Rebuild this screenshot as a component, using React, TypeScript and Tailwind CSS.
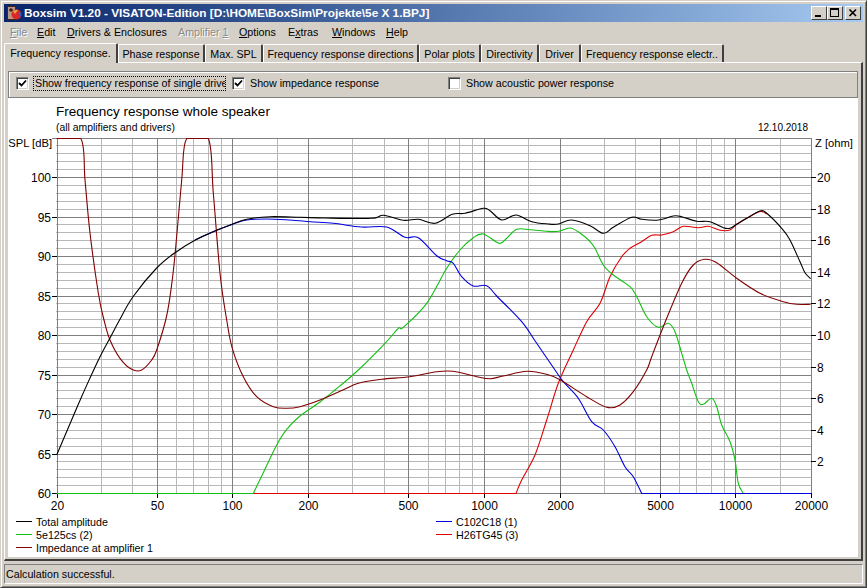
import { useId } from "react"

const ui = "font-['Liberation_Sans',sans-serif] text-[10.7px] leading-[14px] text-black"

// chart scale, page pixels
const xOf = (hz: number) => Math.round(56.5 + (Math.log10(hz / 20) * 754.5) / 3) + 0.5
const yOf = (db: number) => Math.round(493 - (db - 60) * 7.9) + 0.5
const yOhm = (z: number) => Math.round(493 - z * 15.8) + 0.5

const minorHz = [30, 40, 60, 70, 80, 90, 150, 300, 400, 600, 700, 800, 900, 1500, 3000, 4000, 6000, 7000, 8000, 9000, 15000]
const majorHz = [20, 50, 100, 200, 500, 1000, 2000, 5000, 10000, 20000]
const dbAll = Array.from({ length: 46 }, (_, i) => 60 + i)

type Pt = [number, number]

const total: Pt[] = [
  [56.7, 455], [78, 405], [90, 378], [100, 356.7], [110, 338], [119, 321], [133, 296.7], [156.7, 268], [175, 252.7], [196.7, 239.3], [215, 231], [232, 224.3],
  [246.7, 219.3], [270, 216.7], [300, 217.3], [325, 218], [371.7, 218.3], [383.3, 215.3], [403.3, 220.3], [418.3, 219.3],
  [435, 223.3], [452.3, 214.3], [465, 213.3], [483.3, 208.3], [490, 210.7], [501.7, 220], [516, 215], [531.7, 221.7],
  [548.3, 224], [558.3, 224], [571.7, 220], [590, 225.7], [603.3, 233.3], [613.3, 227.3], [631.7, 217.3], [641.7, 219.3],
  [658.3, 220], [673.3, 216], [681.7, 216.7], [696.7, 221.3], [710, 221.7], [723.3, 227.7], [730, 228.3], [736.7, 224.3],
  [746.7, 218.3], [760, 211], [766.7, 213.3], [781.7, 228.3], [790, 240], [800, 261.7], [805, 272.7], [810.7, 278.7],
]

const c102: Pt[] = [
  [195, 240], [215, 231], [232, 224.5], [246.7, 220], [266.7, 219], [290, 220], [310, 221.7], [333.3, 223.3], [361.7, 227],
  [386.7, 227], [405, 237.3], [418.3, 237.7], [436.7, 255.7], [446.7, 260.7], [453.3, 263.3], [461.7, 276.7], [473.3, 286],
  [486.7, 285.7], [496.7, 296], [521.7, 321.7], [536.7, 343.3], [555, 370], [563.3, 381.7], [578.3, 398.3], [591.7, 421.7],
  [603.3, 430], [615, 446.7], [625, 466.7], [633.3, 476.7], [641.7, 493.5], [811, 493.5],
]

const e125: Pt[] = [
  [56.5, 493.5], [253.3, 493.5], [263, 473.3], [276.7, 445], [286.7, 429.3], [300, 416], [320, 402], [335, 390], [358.3, 370],
  [385, 343.3], [398.3, 328.3], [403.3, 327.3], [426.7, 303.3], [446.7, 268.3], [460, 250], [473.3, 237.7], [483.3, 234],
  [499.3, 243.3], [506.7, 238.3], [516.7, 229.3], [530, 229.7], [546.7, 231.3], [558.3, 231.3], [570, 228], [580, 233],
  [590, 241.5], [595, 248.3], [603.3, 265], [613.3, 275], [630, 286.7], [636.7, 296.7], [646.7, 316.7], [658.3, 327.3],
  [668.3, 323.3], [675, 331.7], [681.7, 353.3], [686.7, 370], [691.7, 383.3], [698.3, 401.7], [703.3, 404.3], [711.7, 398.3],
  [716.7, 406.7], [721.7, 425], [730, 441.7], [735, 460], [738.3, 483.3], [743.3, 493.5], [811, 493.5],
]

const h26: Pt[] = [
  [253, 493.5], [516, 493.5], [521.7, 480], [535, 455], [546.7, 420], [558.3, 383.3], [573.3, 350], [586.7, 321.7], [600, 303.3],
  [610, 276.7], [621.7, 256.7], [630, 248.3], [641.7, 241.7], [651.7, 235.3], [661.7, 235], [673.3, 231.7], [683.3, 226.3],
  [698.3, 227.7], [708.3, 226.3], [720, 230.3], [730, 230], [736.7, 224.3], [746.7, 218.3], [760, 211.5], [766.7, 214],
]

const impedance: Pt[] = [
  [56.5, 138.5], [80.7, 138.5], [85, 180], [90, 233], [98.3, 293], [104, 320], [110, 340], [120, 358.3], [131.7, 369.3],
  [141.7, 370], [151.7, 360], [156.7, 350], [165.7, 320], [170, 296.7], [175, 255], [181.7, 180], [186.7, 138.5], [208.3, 138.5],
  [213.3, 193], [220, 273.3], [226.7, 320], [232.3, 348.3], [243.3, 376.7], [256.7, 396.7], [273.3, 406.7], [286.7, 408.3],
  [300, 406.7], [320, 400], [343, 390], [358.3, 383.3], [381.7, 379.3], [410, 376.7], [436.7, 371.7], [453.3, 371.3],
  [476.7, 376.7], [490, 378.7], [503.3, 376], [526.7, 371.3], [546.7, 374.3], [560, 379.8], [586.7, 396.7], [606.7, 407.3],
  [620, 405], [633.3, 391.7], [646.7, 370], [651.7, 356.7], [666.7, 318.3], [681.7, 283.3], [693.3, 265], [705, 259.3],
  [716.7, 262.7], [736.7, 278.3], [760, 293.3], [783.3, 301.7], [796.7, 304.3], [810.7, 304.3],
]

const clampY = (y: number) => Math.min(493.5, Math.max(138.5, y))

// catmull-rom through the read-off points, long flat runs stay straight
function toPath(pts: Pt[]) {
  let d = `M${pts[0][0]} ${pts[0][1]}`
  for (let i = 0; i < pts.length - 1; i++) {
    const p1 = pts[i]
    const p2 = pts[i + 1]
    let p0 = pts[Math.max(i - 1, 0)]
    let p3 = pts[Math.min(i + 2, pts.length - 1)]
    if (p2[0] - p1[0] > 60) {
      d += ` L${p2[0]} ${p2[1]}`
      continue
    }
    if (p1[0] - p0[0] > 60) p0 = p1
    if (p3[0] - p2[0] > 60) p3 = p2
    const c1x = p1[0] + (p2[0] - p0[0]) / 6
    const c1y = clampY(p1[1] + (p2[1] - p0[1]) / 6)
    const c2x = p2[0] - (p3[0] - p1[0]) / 6
    const c2y = clampY(p2[1] - (p3[1] - p1[1]) / 6)
    d += ` C${c1x.toFixed(1)} ${c1y.toFixed(1)} ${c2x.toFixed(1)} ${c2y.toFixed(1)} ${p2[0]} ${p2[1]}`
  }
  return d
}

function Curve({ pts, color }: { pts: Pt[]; color: string }) {
  return <path d={toPath(pts)} fill="none" stroke={color} strokeWidth={1.1} />
}

function Chart() {
  const clip = useId()
  return (
    <svg width={850} height={377} viewBox="8 135 850 377" className="block shrink-0">
      <defs>
        <clipPath id={clip}><rect x={56} y={138} width={756} height={357} /></clipPath>
      </defs>
      {dbAll.filter(d => d % 5 !== 0).map(d => (
        <line key={d} x1={56} x2={811} y1={yOf(d)} y2={yOf(d)} stroke="#b8b8b8" />
      ))}
      {minorHz.map(f => <line key={f} x1={xOf(f)} x2={xOf(f)} y1={138} y2={494} stroke="#b8b8b8" />)}
      {dbAll.filter(d => d % 5 === 0).map(d => (
        <line key={d} x1={52} x2={811} y1={yOf(d)} y2={yOf(d)} stroke="#808080" />
      ))}
      {majorHz.map(f => <line key={f} x1={xOf(f)} x2={xOf(f)} y1={138} y2={498} stroke="#808080" />)}
      {[60, 65, 70, 75, 80, 85, 90, 95, 100].map(d => (
        <g key={d}>
          <line x1={52} x2={57} y1={yOf(d)} y2={yOf(d)} stroke="#000" />
          <text x={51} y={yOf(d) + 4.5} textAnchor="end" fontSize={12} fill="#000">{d}</text>
        </g>
      ))}
      {[2, 4, 6, 8, 10, 12, 14, 16, 18, 20].map(z => (
        <g key={z}>
          <line x1={811} x2={816} y1={yOhm(z)} y2={yOhm(z)} stroke="#000" />
          <text x={817} y={yOhm(z) + 4.5} fontSize={12} fill="#000">{z}</text>
        </g>
      ))}
      {majorHz.map(f => (
        <g key={f}>
          <line x1={xOf(f)} x2={xOf(f)} y1={493} y2={498} stroke="#000" />
          <text x={xOf(f)} y={510} textAnchor="middle" fontSize={12} fill="#000">{f}</text>
        </g>
      ))}
      <text x={52} y={147} textAnchor="end" fontSize={11.2} fill="#000">SPL [dB]</text>
      <text x={815} y={147} fontSize={11.2} fill="#000">Z [ohm]</text>
      <g clipPath={`url(#${clip})`}>
        <Curve pts={h26} color="#e00000" />
        <Curve pts={e125} color="#10c010" />
        <Curve pts={c102} color="#0000e0" />
        <Curve pts={impedance} color="#800000" />
        <Curve pts={total} color="#000000" />
      </g>
    </svg>
  )
}

function Check({ label, checked, focus, className = "" }: { label: string; checked?: boolean; focus?: boolean; className?: string }) {
  return (
    <div className={`flex items-center ${className}`}>
      <span className="w-[13px] h-[13px] shrink-0 bg-white border border-t-[#808080] border-l-[#808080] border-r-white border-b-white shadow-[inset_1px_1px_0_#404040,inset_-1px_-1px_0_#d4d0c8] flex items-center justify-center">
        {checked && (
          <svg width={9} height={9} viewBox="0 0 9 9"><path d="M1 4 L3.5 6.5 L8 1.5" fill="none" stroke="#000" strokeWidth={1.8} /></svg>
        )}
      </span>
      {focus ? (
        <span className="ml-[4px] pl-[1px] w-[193px] h-[15px] overflow-hidden whitespace-nowrap border border-dotted border-black leading-[13px]">{label}</span>
      ) : (
        <span className="ml-[5px] whitespace-nowrap">{label}</span>
      )}
    </div>
  )
}

const menus = [
  { pre: "", key: "F", post: "ile", w: "w-[27px]", off: true },
  { pre: "", key: "E", post: "dit", w: "w-[30px]" },
  { pre: "", key: "D", post: "rivers & Enclosures", w: "w-[111px]" },
  { pre: "Amplifier ", key: "1", post: "", w: "w-[61px]", off: true },
  { pre: "", key: "O", post: "ptions", w: "w-[49px]" },
  { pre: "E", key: "x", post: "tras", w: "w-[44px]" },
  { pre: "", key: "W", post: "indows", w: "w-[54px]" },
  { pre: "", key: "H", post: "elp", w: "w-[30px]" },
]

const tabs = [
  { label: "Phase response", w: "w-[87px]" },
  { label: "Max. SPL", w: "w-[58px]" },
  { label: "Frequency response directions", w: "w-[156px]" },
  { label: "Polar plots", w: "w-[62px]" },
  { label: "Directivity", w: "w-[58px]" },
  { label: "Driver", w: "w-[42px]" },
  { label: "Frequency response electr..", w: "w-[143px]" },
]

function WinButton({ children, className = "" }: { children: React.ReactNode; className?: string }) {
  return (
    <div className={`relative w-[16px] h-[14px] bg-[#d4d0c8] border border-t-white border-l-white border-r-[#404040] border-b-[#404040] ${className}`}>
      {children}
    </div>
  )
}

function LegendItem({ color, label }: { color: string; label: string }) {
  return (
    <div className="flex items-center h-[13px]">
      <span className="block w-[16px] h-px" style={{ backgroundColor: color }} />
      <span className="ml-[4px] whitespace-nowrap">{label}</span>
    </div>
  )
}

export default function App() {
  return (
    <div className={`${ui} w-[867px] h-[588px] overflow-hidden flex flex-col bg-[#d4d0c8] border border-t-[#d4d0c8] border-l-[#d4d0c8] border-r-[#404040] border-b-[#404040] shadow-[inset_1px_1px_0_#fff,inset_-1px_-1px_0_#808080] p-[3px]`}>
      <div className="h-[18px] shrink-0 flex items-center bg-gradient-to-r from-[#0a246a] to-[#a6caf0] pl-[2px] pr-[2px]">
        <svg width={16} height={16} viewBox="0 0 16 16" className="shrink-0">
          <rect x={1} y={1} width={9} height={14} fill="#4a2418" />
          <rect x={2} y={2} width={7} height={12} fill="#b89888" />
          <circle cx={5} cy={5} r={1.8} fill="#3a2018" />
          <circle cx={10.5} cy={9.5} r={5} fill="#d82828" />
          <path d="M7 6.5 A5 5 0 0 1 12 5 L9 9 Z" fill="#f0a040" />
          <path d="M13.5 6 A5 5 0 0 1 14.5 12 L12.5 9 Z" fill="#3858c0" />
        </svg>
        <span className="ml-[2px] font-bold text-[11.8px] text-white whitespace-nowrap">
          Boxsim V1.20 - VISATON-Edition [D:\HOME\BoxSim\Projekte\5e X 1.BPJ]
        </span>
        <div className="ml-auto flex">
          <WinButton><span className="absolute left-[3px] bottom-[2px] w-[6px] h-[2px] bg-black" /></WinButton>
          <WinButton><span className="absolute left-[2px] top-[1px] w-[9px] h-[9px] border border-t-2 border-black" /></WinButton>
          <WinButton className="ml-[2px]">
            <svg width={14} height={12} viewBox="0 0 14 12" className="absolute left-0 top-0">
              <path d="M3.5 2.5 L10 9 M10 2.5 L3.5 9" stroke="#000" strokeWidth={1.6} />
            </svg>
          </WinButton>
        </div>
      </div>

      <div className="h-[20px] shrink-0 flex items-center pl-[6px]">
        {menus.map(m => (
          <span key={m.post + m.pre} className={`${m.w} shrink-0 whitespace-nowrap ${m.off ? "text-[#8a8a8a] [text-shadow:1px_1px_0_#fff]" : ""}`}>
            {m.pre}<span className="underline">{m.key}</span>{m.post}
          </span>
        ))}
      </div>

      <div className="h-[20px] shrink-0 flex items-end relative z-10">
        <div className="w-[114px] h-[20px] -mb-px bg-[#d4d0c8] border-t border-l border-white border-r-2 border-r-[#404040] rounded-t-[2px] flex items-start justify-center pt-[2px] whitespace-nowrap">
          Frequency response.
        </div>
        {tabs.map(t => (
          <div key={t.label} className={`${t.w} h-[18px] bg-[#d4d0c8] border-t border-l border-white border-r-2 border-r-[#404040] rounded-t-[2px] flex items-center justify-center whitespace-nowrap`}>
            {t.label}
          </div>
        ))}
      </div>

      <div className="flex-1 min-h-0 border-t border-l border-white border-r-2 border-r-[#404040] border-b-2 border-b-[#404040] flex flex-col px-[3px] pt-[8px] pb-[2px]">
        <div className="h-[27px] shrink-0 flex items-center border border-[#808080] shadow-[inset_1px_1px_0_#fff] pl-[7px] pb-[3px]">
          <Check label="Show frequency response of single drive" checked focus className="w-[216px]" />
          <Check label="Show impedance response" checked className="w-[216px]" />
          <Check label="Show acoustic power response" />
        </div>
        <div className="flex-1 min-h-0 bg-white flex flex-col">
          <div className="h-[37px] shrink-0 pl-[48px] pr-[50px] pt-[6px]">
            <div className="text-[13.5px] leading-[16px]">Frequency response whole speaker</div>
            <div className="flex justify-between text-[10.4px] leading-[13px] mt-[1px]">
              <span>(all amplifiers and drivers)</span>
              <span className="text-[10px]">12.10.2018</span>
            </div>
          </div>
          <Chart />
          <div className="grid grid-cols-[420px_1fr] grid-rows-3 grid-flow-col pl-[8px] mt-[3px]">
            <LegendItem color="#000000" label="Total amplitude" />
            <LegendItem color="#10c010" label="5e125cs (2)" />
            <LegendItem color="#800000" label="Impedance at amplifier 1" />
            <LegendItem color="#0000e0" label="C102C18 (1)" />
            <LegendItem color="#e00000" label="H26TG45 (3)" />
          </div>
        </div>
      </div>

      <div className="h-[20px] shrink-0 mt-[3px] border border-t-[#808080] border-l-[#808080] border-r-white border-b-white flex items-center pl-[1px]">
        Calculation successful.
      </div>
    </div>
  )
}
